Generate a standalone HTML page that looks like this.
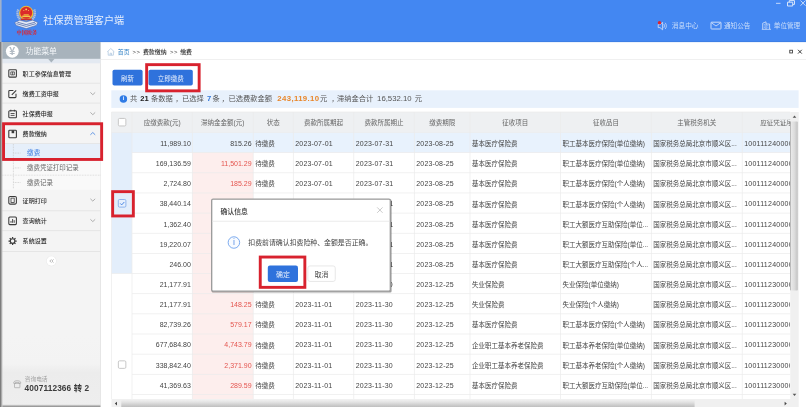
<!DOCTYPE html>
<html lang="zh-CN"><head><meta charset="utf-8"><title>社保费管理客户端</title>
<style>
html,body{margin:0;padding:0;}
body{width:806px;height:407px;overflow:hidden;position:relative;background:#fff;
 font-family:"Liberation Sans","Noto Sans CJK SC",sans-serif;color:#333;}
div,svg{position:absolute;box-sizing:border-box;}
svg{left:0;top:0;}
.t{white-space:nowrap;line-height:1;}
.num{font-size:7px;text-align:right;color:#444;}
.c{font-size:6.5px;color:#444;}
.d{font-size:7px;color:#444;letter-spacing:0.17px;}
.hd{font-size:6.5px;color:#666;text-align:center;}
#bl{left:-6px;top:-6px;width:818px;height:419px;filter:blur(0.4px);will-change:transform;overflow:hidden;}
#pg{left:6px;top:6px;width:806px;height:407px;}
svg{overflow:visible;}
</style></head><body><div id="bl"><div id="pg">
<svg width="806" height="407" viewBox="0 0 806 407">
<rect x="-6.00" y="-6.00" width="818.00" height="48.00" fill="#4387f2" />
<rect x="-6.00" y="41.30" width="818.00" height="0.80" fill="#3b7ce2" />
<g>
<path d="M18.2 9.5C16.6 13.2 17.6 18 21.4 20.6M34.2 9.5C35.8 13.2 34.8 18 31 20.6" fill="none" stroke="#aebfdf" stroke-width="2.3" stroke-dasharray="1.3 0.5"/>
<path d="M14.7 22.6L19.6 20.2L26.2 21.8L32.8 20.2L37.9 22.6L36.2 25.4L26.2 28.6L16.3 25.4Z" fill="#e3eaf6" stroke="#4c66a8" stroke-width="0.55" stroke-linejoin="round"/>
<path d="M16.4 23.6L26.2 26.4L36 23.6M17.4 22.2L26.2 24.6L35 22.2" fill="none" stroke="#3f5aa0" stroke-width="0.7"/>
<circle cx="26.2" cy="13.1" r="7.3" fill="#e9b93f"/>
<circle cx="26.2" cy="12.7" r="6" fill="#db2a2a"/>
<path d="M22.2 15.6h8v1.5h-8z" fill="#f1c84b"/>
<path d="M23.6 14.2h5.2v1.4h-5.2z" fill="#eeb93e"/>
<circle cx="26.2" cy="9.4" r="0.95" fill="#f7d660"/>
<circle cx="23.9" cy="10.6" r="0.5" fill="#f7d660"/><circle cx="28.5" cy="10.6" r="0.5" fill="#f7d660"/>
<path d="M20.6 18.6h11.2v1.5H20.6z" fill="#c9302f"/>
</g>
<rect x="776.00" y="2.85" width="4.50" height="0.90" fill="#cfe0fb" />
<g transform="translate(786.50 0.00)"><path d="M1 2.2h5.2v3.8H1z M2.8 2.2V0.6H8v3.8H6.2" fill="none" stroke="#d6e4fb" stroke-width="1"/></g>
<g transform="translate(799.50 0.00)"><path d="M1 0.5l5 5.2M6 0.5l-5 5.2" fill="none" stroke="#cfe0fb" stroke-width="0.9"/></g>
<g transform="translate(656.00 20.40)"><path d="M2.2 4.2h1.8l2.6-2.2v7.4L4 7.2H2.2z" fill="none" stroke="#d4e2fa" stroke-width="0.8" stroke-linejoin="round"/>
<path d="M7.8 3.6c.8.9.8 2.9 0 3.8M9.2 2.4c1.5 1.6 1.5 4.6 0 6.2" fill="none" stroke="#d4e2fa" stroke-width="0.75"/>
<circle cx="3.5" cy="2.3" r="1.75" fill="#e0252d"/></g>
<g transform="translate(710.50 21.70)"><rect x="0.5" y="0.5" width="10" height="6.8" rx="0.6" fill="none" stroke="#d8e5fb" stroke-width="0.9"/>
<path d="M0.8 1l4.7 3.3L10.2 1" fill="none" stroke="#d8e5fb" stroke-width="0.8"/></g>
<g transform="translate(761.50 21.00)"><path d="M1.2 8.2V2.2l3.3-1.4v7.4M4.5 3h3.6v5.2M0.3 8.3h9.2" fill="none" stroke="#d4e2fa" stroke-width="0.8"/>
<path d="M2.3 3.4h1.1M2.3 5h1.1M2.3 6.6h1.1M5.8 4.6h1.1M5.8 6.2h1.1" stroke="#d4e2fa" stroke-width="0.6"/></g>
<rect x="-6.00" y="42.00" width="106.40" height="371.00" fill="#f4f4f4" />
<rect x="100.05" y="42.00" width="0.70" height="371.00" fill="#dedede" />
<rect x="2.00" y="42.00" width="98.40" height="16.90" fill="#a8b3bc" />
<rect x="2.00" y="58.90" width="98.40" height="4.40" fill="#e3e9f1" />
<path d="M48 58.8h6.6L51.3 62.6z" fill="#a8b3bc"/>
<circle cx="12.3" cy="51.3" r="6.4" fill="#fff"/>
<rect x="2.00" y="143.50" width="98.40" height="46.40" fill="#f9f9f9" />
<rect x="2.00" y="143.60" width="98.40" height="16.90" fill="#e6effa" />
<rect x="2.00" y="82.80" width="98.40" height="0.80" fill="#e2e2e2" />
<g transform="translate(8.20 69.10)"><rect x="0.6" y="0.6" width="7.6" height="7.4" rx="0.8" fill="none" stroke="#3a3a3a" stroke-width="1.05"/><path d="M2.6 2.8h3.6v3H2.6zM4.4 2.8v3" fill="none" stroke="#3a3a3a" stroke-width="0.75"/></g>
<rect x="2.00" y="102.70" width="98.40" height="0.80" fill="#e2e2e2" />
<g transform="translate(8.20 89.50)"><path d="M5.2 0.9H1.4a.8.8 0 0 0-.8.8v5.6a.8.8 0 0 0 .8.8h5.6a.8.8 0 0 0 .8-.8V4.2" fill="none" stroke="#3a3a3a" stroke-width="1.05"/><path d="M3.6 5.4L8 0.9" stroke="#3a3a3a" stroke-width="1.1"/></g>
<g transform="translate(89.80 91.50)"><path d="M0.6 0.9L3 3.2L5.4 0.9" fill="none" stroke="#9c9c9c" stroke-width="0.8"/></g>
<rect x="2.00" y="122.60" width="98.40" height="0.80" fill="#e2e2e2" />
<g transform="translate(8.20 109.50)"><rect x="0.6" y="1.3" width="7.6" height="6.9" rx="0.8" fill="none" stroke="#3a3a3a" stroke-width="1.05"/><path d="M2.6 0.2v1.8M6.2 0.2v1.8M2.4 4h4M2.4 5.9h4" stroke="#3a3a3a" stroke-width="0.85"/></g>
<g transform="translate(89.80 111.50)"><path d="M0.6 0.9L3 3.2L5.4 0.9" fill="none" stroke="#9c9c9c" stroke-width="0.8"/></g>
<rect x="2.00" y="143.10" width="98.40" height="0.80" fill="#e2e2e2" />
<g transform="translate(8.20 129.60)"><rect x="0.6" y="0.6" width="7.6" height="7.6" rx="0.9" fill="none" stroke="#3a3a3a" stroke-width="1.1"/><path d="M3.4 0.8h2.6v2.8H3.4z" fill="#3a3a3a"/></g>
<g transform="translate(89.80 131.60)"><path d="M0.6 3.2L3 0.9L5.4 3.2" fill="none" stroke="#3b7de0" stroke-width="0.8"/></g>
<rect x="2.00" y="210.40" width="98.40" height="0.80" fill="#e2e2e2" />
<g transform="translate(8.20 195.90)"><rect x="0.6" y="0.6" width="7.6" height="7.6" rx="1.3" fill="none" stroke="#3a3a3a" stroke-width="1.05"/><rect x="2.8" y="2.2" width="3.2" height="4.4" fill="none" stroke="#3a3a3a" stroke-width="0.8"/></g>
<g transform="translate(89.80 197.90)"><path d="M0.6 0.9L3 3.2L5.4 0.9" fill="none" stroke="#9c9c9c" stroke-width="0.8"/></g>
<rect x="2.00" y="230.30" width="98.40" height="0.80" fill="#e2e2e2" />
<g transform="translate(8.20 216.40)"><rect x="0.6" y="0.6" width="7.6" height="7.6" rx="1" fill="none" stroke="#3a3a3a" stroke-width="1.05"/><path d="M2.8 6.4V4.6M4.4 6.4V2.6M6 6.4V3.8" stroke="#3a3a3a" stroke-width="0.9"/></g>
<g transform="translate(89.80 218.40)"><path d="M0.6 0.9L3 3.2L5.4 0.9" fill="none" stroke="#9c9c9c" stroke-width="0.8"/></g>
<rect x="2.00" y="251.00" width="98.40" height="0.80" fill="#e2e2e2" />
<g transform="translate(8.20 236.60)"><circle cx="4.4" cy="4.4" r="2.3" fill="none" stroke="#3a3a3a" stroke-width="1.15"/><path d="M7.00 4.40L8.50 4.40M6.24 6.24L7.30 7.30M4.40 7.00L4.40 8.50M2.56 6.24L1.50 7.30M1.80 4.40L0.30 4.40M2.56 2.56L1.50 1.50M4.40 1.80L4.40 0.30M6.24 2.56L7.30 1.50" stroke="#3a3a3a" stroke-width="1.25"/></g>
<path d="M2 175.2H100.4" stroke="#d0d0d0" stroke-width="0.7" stroke-dasharray="0.8 0.8"/>
<path d="M13.4 144V189" stroke="#c4c4c4" stroke-width="0.7" stroke-dasharray="0.8 0.8"/>
<path d="M13.4 153.1H20.4" stroke="#c4c4c4" stroke-width="0.7" stroke-dasharray="0.8 0.8"/>
<path d="M13.4 167.9H20.4" stroke="#c4c4c4" stroke-width="0.7" stroke-dasharray="0.8 0.8"/>
<path d="M13.4 182.5H20.4" stroke="#c4c4c4" stroke-width="0.7" stroke-dasharray="0.8 0.8"/>
<circle cx="51.4" cy="261" r="5.2" fill="#e9e9e9"/><circle cx="51.4" cy="261" r="4.7" fill="#fff"/>
<g transform="translate(49.20 259.00)"><path d="M2.2 0.4L0.6 2l1.6 1.6M4.3 0.4L2.7 2l1.6 1.6" fill="none" stroke="#9a9a9a" stroke-width="0.7"/></g>
<defs><linearGradient id="wm" x1="0" y1="0" x2="0" y2="1"><stop offset="0" stop-color="#f4f4f4"/><stop offset="0.4" stop-color="#f3f3f3"/><stop offset="0.52" stop-color="#ececec"/><stop offset="1" stop-color="#eeeeee"/></linearGradient><linearGradient id="bs" x1="0" y1="0" x2="0" y2="1"><stop offset="0" stop-color="#dcdcdc"/><stop offset="1" stop-color="#8c8c8c"/></linearGradient></defs>
<rect x="2.00" y="335.00" width="98.00" height="72.00" fill="url(#wm)" />
<rect x="2.00" y="404.60" width="98.40" height="2.40" fill="url(#bs)" />
<rect x="2.00" y="406.90" width="98.40" height="7.00" fill="#8c8c8c" />
<g transform="translate(13.20 379.80)"><path d="M0.5 2.8c0-2.5 7-2.5 7 0v0.7H5.6V2.6H2.4v0.9H0.5z" fill="none" stroke="#9a9a9a" stroke-width="0.6"/><rect x="1.3" y="3.6" width="5.4" height="4.3" rx="0.5" fill="none" stroke="#9a9a9a" stroke-width="0.6"/></g>
<rect x="-6.00" y="-6.00" width="7.60" height="48.00" fill="#9fb1cc" />
<rect x="-6.00" y="42.00" width="7.70" height="371.00" fill="#7d7d7d" />
<rect x="1.70" y="42.00" width="0.80" height="371.00" fill="#c8c8c8" />
<rect x="101.00" y="59.10" width="711.00" height="0.80" fill="#ececec" />
<g transform="translate(106.60 47.60)"><path d="M0.6 4.3L4.2 0.9l3.6 3.4M1.6 3.8v3.8h5.2V3.8M3.5 7.6V5.6h1.4v2" fill="none" stroke="#a9c3dc" stroke-width="0.7" stroke-linejoin="round"/></g>
<rect x="789.75" y="50.25" width="2.70" height="2.70" rx="0" fill="none" stroke="#444" stroke-width="0.9"/>
<g transform="translate(797.40 49.20)"><path d="M0.6 0.6l3.8 3.8M4.4 0.6L0.6 4.4" stroke="#333" stroke-width="0.95"/></g>
<rect x="112.50" y="69.70" width="30.10" height="15.80" fill="#2f72dc" rx="1.8"/>
<rect x="148.50" y="69.70" width="44.30" height="15.80" fill="#2f72dc" rx="1.8"/>
<rect x="111.30" y="90.30" width="687.30" height="17.60" fill="#e8f1fc" />
<circle cx="123.4" cy="99" r="3.75" fill="#2f7be6"/>
<rect x="111.50" y="112.00" width="678.80" height="20.50" fill="#eef0f2" />
<rect x="111.50" y="132.50" width="678.80" height="20.15" fill="#e8f2fd" />
<rect x="111.50" y="132.50" width="20.50" height="141.05" fill="#e3eefb" />
<rect x="192.30" y="152.65" width="60.90" height="246.35" fill="#fdeeed" />
<rect x="111.50" y="111.65" width="678.80" height="0.70" fill="#ebebeb" />
<rect x="111.50" y="132.15" width="678.80" height="0.70" fill="#ebebeb" />
<rect x="132.00" y="152.30" width="658.30" height="0.70" fill="#ebebeb" />
<rect x="132.00" y="172.45" width="658.30" height="0.70" fill="#ebebeb" />
<rect x="132.00" y="192.60" width="658.30" height="0.70" fill="#ebebeb" />
<rect x="132.00" y="212.75" width="658.30" height="0.70" fill="#ebebeb" />
<rect x="132.00" y="232.90" width="658.30" height="0.70" fill="#ebebeb" />
<rect x="132.00" y="253.05" width="658.30" height="0.70" fill="#ebebeb" />
<rect x="111.50" y="273.20" width="678.80" height="0.70" fill="#ebebeb" />
<rect x="132.00" y="293.35" width="658.30" height="0.70" fill="#ebebeb" />
<rect x="132.00" y="313.50" width="658.30" height="0.70" fill="#ebebeb" />
<rect x="132.00" y="333.65" width="658.30" height="0.70" fill="#ebebeb" />
<rect x="132.00" y="353.80" width="658.30" height="0.70" fill="#ebebeb" />
<rect x="132.00" y="373.95" width="658.30" height="0.70" fill="#ebebeb" />
<rect x="132.00" y="394.10" width="658.30" height="0.70" fill="#ebebeb" />
<rect x="111.15" y="112.00" width="0.70" height="287.00" fill="#ebebeb" />
<rect x="131.65" y="112.00" width="0.70" height="287.00" fill="#ebebeb" />
<rect x="191.95" y="112.00" width="0.70" height="287.00" fill="#ebebeb" />
<rect x="252.85" y="112.00" width="0.70" height="287.00" fill="#ebebeb" />
<rect x="292.95" y="112.00" width="0.70" height="287.00" fill="#ebebeb" />
<rect x="353.45" y="112.00" width="0.70" height="287.00" fill="#ebebeb" />
<rect x="413.95" y="112.00" width="0.70" height="287.00" fill="#ebebeb" />
<rect x="469.65" y="112.00" width="0.70" height="287.00" fill="#ebebeb" />
<rect x="560.15" y="112.00" width="0.70" height="287.00" fill="#ebebeb" />
<rect x="650.95" y="112.00" width="0.70" height="287.00" fill="#ebebeb" />
<rect x="741.85" y="112.00" width="0.70" height="287.00" fill="#ebebeb" />
<rect x="118.35" y="118.45" width="7.50" height="7.50" rx="1.2" fill="#fff" stroke="#c2c2c2" stroke-width="0.9"/>
<rect x="118.30" y="199.50" width="7.60" height="7.60" rx="1.2" fill="#e6f0fd" stroke="#7aa6e8" stroke-width="0.8"/>
<g transform="translate(117.90 199.10)"><path d="M2.3 4.3l1.5 1.5l2.6-2.9" fill="none" stroke="#3b7de0" stroke-width="0.9"/></g>
<rect x="118.35" y="360.85" width="7.50" height="7.50" rx="1.2" fill="#fff" stroke="#c2c2c2" stroke-width="0.9"/>
<rect x="790.30" y="112.00" width="8.40" height="287.00" fill="#f0f0f0" />
<defs><linearGradient id="vt" x1="0" y1="0" x2="1" y2="0"><stop offset="0" stop-color="#8f8f8f"/><stop offset="0.12" stop-color="#e9e9e9"/><stop offset="0.55" stop-color="#dcdcdc"/><stop offset="1" stop-color="#c2c2c2"/></linearGradient><linearGradient id="ht" gradientUnits="userSpaceOnUse" x1="0" y1="399.6" x2="0" y2="407.4"><stop offset="0" stop-color="#f1f1f1"/><stop offset="0.35" stop-color="#e2e2e2"/><stop offset="1" stop-color="#bcbcbc"/></linearGradient></defs>
<rect x="790.30" y="121.60" width="7.50" height="169.00" fill="url(#vt)" rx="0.8"/>
<path d="M792.7 117.8L794.5 115.6l1.8 2.2z" fill="#555"/>
<path d="M792.7 393.8L794.5 396l1.8-2.2z" fill="#555"/>
<rect x="111.50" y="399.00" width="687.20" height="14.00" fill="#f0f0f0" />
<rect x="121.30" y="399.80" width="573.30" height="14.00" fill="url(#ht)" rx="0.8"/>
<path d="M117 401.8L114.8 403.6l2.2 1.8z" fill="#444"/>
<path d="M784.6 401.8L786.8 403.6l-2.2 1.8z" fill="#444"/>
</svg>
<div class="t" style="left:16.60px;top:30.30px;font-size:5.1px;color:#e0222c;font-weight:700;font-family:'Liberation Serif','Noto Serif CJK SC',serif;">中国税务</div>
<div class="t" style="left:43.30px;top:15.80px;font-size:10.1px;color:#e6eefc;letter-spacing:0.02px">社保费管理客户端</div>
<div class="t" style="left:671.80px;top:23.30px;font-size:6.7px;color:#cddffa">消息中心</div>
<div class="t" style="left:724.00px;top:23.30px;font-size:6.6px;color:#cddffa">通知公告</div>
<div class="t" style="left:773.80px;top:23.30px;font-size:6.6px;color:#cddffa">单位管理</div>
<div class="t" style="left:6.30px;top:46.10px;width:12px;text-align:center;font-size:10.6px;font-weight:700;color:#b3bcc5;font-family:'Liberation Sans',sans-serif">¥</div>
<div class="t" style="left:25.40px;top:47.80px;font-size:7.9px;color:#f4f7fa">功能菜单</div>
<div class="t" style="left:22.60px;top:70.90px;font-size:6.05px;font-weight:500;color:#2b2b2b">职工参保信息管理</div>
<div class="t" style="left:22.60px;top:91.30px;font-size:6.05px;font-weight:500;color:#2b2b2b">缴费工资申报</div>
<div class="t" style="left:22.60px;top:111.30px;font-size:6.05px;font-weight:500;color:#2b2b2b">社保费申报</div>
<div class="t" style="left:22.60px;top:131.40px;font-size:6.05px;font-weight:500;color:#2b2b2b">费款缴纳</div>
<div class="t" style="left:22.60px;top:197.70px;font-size:6.05px;font-weight:500;color:#2b2b2b">证明打印</div>
<div class="t" style="left:22.60px;top:218.20px;font-size:6.05px;font-weight:500;color:#2b2b2b">查询统计</div>
<div class="t" style="left:22.60px;top:238.40px;font-size:6.05px;font-weight:500;color:#2b2b2b">系统设置</div>
<div class="t" style="left:27.10px;top:149.90px;font-size:6.55px;color:#3a7be0">缴费</div>
<div class="t" style="left:27.10px;top:165.30px;font-size:6.45px;color:#666">缴费凭证打印记录</div>
<div class="t" style="left:27.10px;top:180.00px;font-size:6.45px;color:#666">缴费记录</div>
<div class="t" style="left:24.80px;top:376.60px;font-size:5.7px;color:#a2a2a2">咨询电话</div>
<div class="t" style="left:24.60px;top:384.10px;font-size:8.3px;color:#3c3c3c;font-weight:700;letter-spacing:0.1px">4007112366 转 2</div>
<div class="t" style="left:117.80px;top:50.40px;font-size:5.9px;color:#2e7fc4">首页</div>
<div class="t" style="left:132.40px;top:50.30px;font-size:5.9px;color:#444;letter-spacing:0.6px">&gt;&gt;</div>
<div class="t" style="left:142.90px;top:50.40px;font-size:5.95px;color:#333;font-weight:500">费款缴纳</div>
<div class="t" style="left:170.00px;top:50.30px;font-size:5.9px;color:#444;letter-spacing:0.6px">&gt;&gt;</div>
<div class="t" style="left:180.20px;top:50.40px;font-size:5.9px;color:#333;font-weight:500">缴费</div>
<div class="t" style="left:112.50px;top:75.70px;width:30px;text-align:center;font-size:6.4px;color:#eaf1fd">刷新</div>
<div class="t" style="left:148.50px;top:75.70px;width:44.3px;text-align:center;font-size:6.5px;color:#eaf1fd">立即缴费</div>
<div class="t" style="left:119.70px;top:96.30px;width:7.5px;text-align:center;font-size:5.4px;color:#fff;font-weight:700">i</div>
<div class="t" style="left:129.90px;top:95.10px;font-size:7.25px;color:#555">共</div>
<div class="t" style="left:140.30px;top:94.50px;font-weight:700;color:#222;font-size:7.6px">21</div>
<div class="t" style="left:151.00px;top:95.10px;font-size:7.25px;color:#555">条数据</div>
<div class="t" style="left:175.20px;top:95.10px;font-size:7.25px;color:#555">，</div>
<div class="t" style="left:182.00px;top:95.10px;font-size:7.25px;color:#555">已选择</div>
<div class="t" style="left:207.10px;top:94.50px;font-weight:700;color:#2f74d8;font-size:7.6px">7</div>
<div class="t" style="left:212.60px;top:95.10px;font-size:7.25px;color:#555">条</div>
<div class="t" style="left:221.60px;top:95.10px;font-size:7.25px;color:#555">，</div>
<div class="t" style="left:228.60px;top:95.10px;font-size:7.25px;color:#555">已选费款金额</div>
<div class="t" style="left:277.30px;top:95.00px;font-weight:700;color:#e8862a;font-size:7.8px;letter-spacing:0.36px">243,119.10</div>
<div class="t" style="left:319.90px;top:95.10px;font-size:7.25px;color:#555">元</div>
<div class="t" style="left:331.20px;top:95.10px;font-size:7.25px;color:#555">，</div>
<div class="t" style="left:337.00px;top:95.10px;font-size:7.25px;color:#555">滞纳金合计</div>
<div class="t" style="left:377.10px;top:95.00px;font-size:7.75px;color:#555">16,532.10</div>
<div class="t" style="left:414.80px;top:95.10px;font-size:7.25px;color:#555">元</div>
<div class="t hd" style="left:132.00px;top:119.70px;width:60.30px;">应缴费款(元)</div>
<div class="t hd" style="left:192.30px;top:119.70px;width:60.90px;">滞纳金金额(元)</div>
<div class="t hd" style="left:253.20px;top:119.70px;width:40.10px;">状态</div>
<div class="t hd" style="left:293.30px;top:119.70px;width:60.50px;">费款所属期起</div>
<div class="t hd" style="left:353.80px;top:119.70px;width:60.50px;">费款所属期止</div>
<div class="t hd" style="left:414.30px;top:119.70px;width:55.70px;">缴费期限</div>
<div class="t hd" style="left:470.00px;top:119.70px;width:90.50px;">征收项目</div>
<div class="t hd" style="left:560.50px;top:119.70px;width:90.80px;">征收品目</div>
<div class="t hd" style="left:651.30px;top:119.70px;width:90.90px;">主管税务机关</div>
<div class="t hd" style="left:742.20px;top:119.70px;width:75.10px;clip-path:inset(0 27.00px 0 0);">应征凭证序号</div>
<div class="t num" style="left:132.00px;top:139.90px;width:58.80px">11,989.10</div>
<div class="t num" style="left:192.30px;top:139.90px;width:59.30px;color:#444">815.26</div>
<div class="t c" style="left:255.20px;top:141.10px;">待缴费</div>
<div class="t d" style="left:295.30px;top:139.90px;">2023-07-01</div>
<div class="t d" style="left:355.80px;top:139.90px;">2023-07-31</div>
<div class="t d" style="left:416.30px;top:139.90px;">2023-08-25</div>
<div class="t c" style="left:472.00px;top:141.10px;">基本医疗保险费</div>
<div class="t c" style="left:562.50px;top:141.10px;">职工基本医疗保险(单位缴纳)</div>
<div class="t c" style="left:653.30px;top:141.10px;">国家税务总局北京市顺义区...</div>
<div class="t d" style="left:744.20px;top:139.90px;width:46.10px;overflow:hidden;letter-spacing:0.25px">100111240000</div>
<div class="t num" style="left:132.00px;top:160.05px;width:58.80px">169,136.59</div>
<div class="t num" style="left:192.30px;top:160.05px;width:59.30px;color:#e4554f">11,501.29</div>
<div class="t c" style="left:255.20px;top:161.25px;">待缴费</div>
<div class="t d" style="left:295.30px;top:160.05px;">2023-07-01</div>
<div class="t d" style="left:355.80px;top:160.05px;">2023-07-31</div>
<div class="t d" style="left:416.30px;top:160.05px;">2023-08-25</div>
<div class="t c" style="left:472.00px;top:161.25px;">基本医疗保险费</div>
<div class="t c" style="left:562.50px;top:161.25px;">职工基本医疗保险(单位缴纳)</div>
<div class="t c" style="left:653.30px;top:161.25px;">国家税务总局北京市顺义区...</div>
<div class="t d" style="left:744.20px;top:160.05px;width:46.10px;overflow:hidden;letter-spacing:0.25px">100111240000</div>
<div class="t num" style="left:132.00px;top:180.20px;width:58.80px">2,724.80</div>
<div class="t num" style="left:192.30px;top:180.20px;width:59.30px;color:#e4554f">185.29</div>
<div class="t c" style="left:255.20px;top:181.40px;">待缴费</div>
<div class="t d" style="left:295.30px;top:180.20px;">2023-07-01</div>
<div class="t d" style="left:355.80px;top:180.20px;">2023-07-31</div>
<div class="t d" style="left:416.30px;top:180.20px;">2023-08-25</div>
<div class="t c" style="left:472.00px;top:181.40px;">基本医疗保险费</div>
<div class="t c" style="left:562.50px;top:181.40px;">职工基本医疗保险(个人缴纳)</div>
<div class="t c" style="left:653.30px;top:181.40px;">国家税务总局北京市顺义区...</div>
<div class="t d" style="left:744.20px;top:180.20px;width:46.10px;overflow:hidden;letter-spacing:0.25px">100111240000</div>
<div class="t num" style="left:132.00px;top:200.35px;width:58.80px">38,440.14</div>
<div class="t num" style="left:192.30px;top:200.35px;width:59.30px;color:#e4554f">2,613.93</div>
<div class="t c" style="left:255.20px;top:201.55px;">待缴费</div>
<div class="t d" style="left:295.30px;top:200.35px;">2023-07-01</div>
<div class="t d" style="left:355.80px;top:200.35px;">2023-07-31</div>
<div class="t d" style="left:416.30px;top:200.35px;">2023-08-25</div>
<div class="t c" style="left:472.00px;top:201.55px;">基本医疗保险费</div>
<div class="t c" style="left:562.50px;top:201.55px;">职工基本医疗保险(个人缴纳)</div>
<div class="t c" style="left:653.30px;top:201.55px;">国家税务总局北京市顺义区...</div>
<div class="t d" style="left:744.20px;top:200.35px;width:46.10px;overflow:hidden;letter-spacing:0.25px">100111240000</div>
<div class="t num" style="left:132.00px;top:220.50px;width:58.80px">1,362.40</div>
<div class="t num" style="left:192.30px;top:220.50px;width:59.30px;color:#e4554f">92.64</div>
<div class="t c" style="left:255.20px;top:221.70px;">待缴费</div>
<div class="t d" style="left:295.30px;top:220.50px;">2023-07-01</div>
<div class="t d" style="left:355.80px;top:220.50px;">2023-07-31</div>
<div class="t d" style="left:416.30px;top:220.50px;">2023-08-25</div>
<div class="t c" style="left:472.00px;top:221.70px;">基本医疗保险费</div>
<div class="t c" style="left:562.50px;top:221.70px;">职工大额医疗互助保险(单位...</div>
<div class="t c" style="left:653.30px;top:221.70px;">国家税务总局北京市顺义区...</div>
<div class="t d" style="left:744.20px;top:220.50px;width:46.10px;overflow:hidden;letter-spacing:0.25px">100111240000</div>
<div class="t num" style="left:132.00px;top:240.65px;width:58.80px">19,220.07</div>
<div class="t num" style="left:192.30px;top:240.65px;width:59.30px;color:#e4554f">1,306.96</div>
<div class="t c" style="left:255.20px;top:241.85px;">待缴费</div>
<div class="t d" style="left:295.30px;top:240.65px;">2023-07-01</div>
<div class="t d" style="left:355.80px;top:240.65px;">2023-07-31</div>
<div class="t d" style="left:416.30px;top:240.65px;">2023-08-25</div>
<div class="t c" style="left:472.00px;top:241.85px;">基本医疗保险费</div>
<div class="t c" style="left:562.50px;top:241.85px;">职工大额医疗互助保险(单位...</div>
<div class="t c" style="left:653.30px;top:241.85px;">国家税务总局北京市顺义区...</div>
<div class="t d" style="left:744.20px;top:240.65px;width:46.10px;overflow:hidden;letter-spacing:0.25px">100111240000</div>
<div class="t num" style="left:132.00px;top:260.80px;width:58.80px">246.00</div>
<div class="t num" style="left:192.30px;top:260.80px;width:59.30px;color:#e4554f">16.73</div>
<div class="t c" style="left:255.20px;top:262.00px;">待缴费</div>
<div class="t d" style="left:295.30px;top:260.80px;">2023-07-01</div>
<div class="t d" style="left:355.80px;top:260.80px;">2023-07-31</div>
<div class="t d" style="left:416.30px;top:260.80px;">2023-08-25</div>
<div class="t c" style="left:472.00px;top:262.00px;">基本医疗保险费</div>
<div class="t c" style="left:562.50px;top:262.00px;">职工大额医疗互助保险(个人...</div>
<div class="t c" style="left:653.30px;top:262.00px;">国家税务总局北京市顺义区...</div>
<div class="t d" style="left:744.20px;top:260.80px;width:46.10px;overflow:hidden;letter-spacing:0.25px">100111240000</div>
<div class="t num" style="left:132.00px;top:280.95px;width:58.80px">21,177.91</div>
<div class="t num" style="left:192.30px;top:280.95px;width:59.30px;color:#e4554f">148.25</div>
<div class="t c" style="left:255.20px;top:282.15px;">待缴费</div>
<div class="t d" style="left:295.30px;top:280.95px;">2023-11-01</div>
<div class="t d" style="left:355.80px;top:280.95px;">2023-11-30</div>
<div class="t d" style="left:416.30px;top:280.95px;">2023-12-25</div>
<div class="t c" style="left:472.00px;top:282.15px;">失业保险费</div>
<div class="t c" style="left:562.50px;top:282.15px;">失业保险(单位缴纳)</div>
<div class="t c" style="left:653.30px;top:282.15px;">国家税务总局北京市顺义区...</div>
<div class="t d" style="left:744.20px;top:280.95px;width:46.10px;overflow:hidden;letter-spacing:0.25px">100111230000</div>
<div class="t num" style="left:132.00px;top:301.10px;width:58.80px">21,177.91</div>
<div class="t num" style="left:192.30px;top:301.10px;width:59.30px;color:#e4554f">148.25</div>
<div class="t c" style="left:255.20px;top:302.30px;">待缴费</div>
<div class="t d" style="left:295.30px;top:301.10px;">2023-11-01</div>
<div class="t d" style="left:355.80px;top:301.10px;">2023-11-30</div>
<div class="t d" style="left:416.30px;top:301.10px;">2023-12-25</div>
<div class="t c" style="left:472.00px;top:302.30px;">失业保险费</div>
<div class="t c" style="left:562.50px;top:302.30px;">失业保险(个人缴纳)</div>
<div class="t c" style="left:653.30px;top:302.30px;">国家税务总局北京市顺义区...</div>
<div class="t d" style="left:744.20px;top:301.10px;width:46.10px;overflow:hidden;letter-spacing:0.25px">100111230000</div>
<div class="t num" style="left:132.00px;top:321.25px;width:58.80px">82,739.26</div>
<div class="t num" style="left:192.30px;top:321.25px;width:59.30px;color:#e4554f">579.17</div>
<div class="t c" style="left:255.20px;top:322.45px;">待缴费</div>
<div class="t d" style="left:295.30px;top:321.25px;">2023-11-01</div>
<div class="t d" style="left:355.80px;top:321.25px;">2023-11-30</div>
<div class="t d" style="left:416.30px;top:321.25px;">2023-12-25</div>
<div class="t c" style="left:472.00px;top:322.45px;">基本医疗保险费</div>
<div class="t c" style="left:562.50px;top:322.45px;">职工基本医疗保险(个人缴纳)</div>
<div class="t c" style="left:653.30px;top:322.45px;">国家税务总局北京市顺义区...</div>
<div class="t d" style="left:744.20px;top:321.25px;width:46.10px;overflow:hidden;letter-spacing:0.25px">100111230000</div>
<div class="t num" style="left:132.00px;top:341.40px;width:58.80px">677,684.80</div>
<div class="t num" style="left:192.30px;top:341.40px;width:59.30px;color:#e4554f">4,743.79</div>
<div class="t c" style="left:255.20px;top:342.60px;">待缴费</div>
<div class="t d" style="left:295.30px;top:341.40px;">2023-11-01</div>
<div class="t d" style="left:355.80px;top:341.40px;">2023-11-30</div>
<div class="t d" style="left:416.30px;top:341.40px;">2023-12-25</div>
<div class="t c" style="left:472.00px;top:342.60px;">企业职工基本养老保险费</div>
<div class="t c" style="left:562.50px;top:342.60px;">职工基本养老保险(单位缴纳)</div>
<div class="t c" style="left:653.30px;top:342.60px;">国家税务总局北京市顺义区...</div>
<div class="t d" style="left:744.20px;top:341.40px;width:46.10px;overflow:hidden;letter-spacing:0.25px">100111230000</div>
<div class="t num" style="left:132.00px;top:361.55px;width:58.80px">338,842.40</div>
<div class="t num" style="left:192.30px;top:361.55px;width:59.30px;color:#e4554f">2,371.90</div>
<div class="t c" style="left:255.20px;top:362.75px;">待缴费</div>
<div class="t d" style="left:295.30px;top:361.55px;">2023-11-01</div>
<div class="t d" style="left:355.80px;top:361.55px;">2023-11-30</div>
<div class="t d" style="left:416.30px;top:361.55px;">2023-12-25</div>
<div class="t c" style="left:472.00px;top:362.75px;">企业职工基本养老保险费</div>
<div class="t c" style="left:562.50px;top:362.75px;">职工基本养老保险(个人缴纳)</div>
<div class="t c" style="left:653.30px;top:362.75px;">国家税务总局北京市顺义区...</div>
<div class="t d" style="left:744.20px;top:361.55px;width:46.10px;overflow:hidden;letter-spacing:0.25px">100111230000</div>
<div class="t num" style="left:132.00px;top:381.70px;width:58.80px">41,369.63</div>
<div class="t num" style="left:192.30px;top:381.70px;width:59.30px;color:#e4554f">289.59</div>
<div class="t c" style="left:255.20px;top:382.90px;">待缴费</div>
<div class="t d" style="left:295.30px;top:381.70px;">2023-11-01</div>
<div class="t d" style="left:355.80px;top:381.70px;">2023-11-30</div>
<div class="t d" style="left:416.30px;top:381.70px;">2023-12-25</div>
<div class="t c" style="left:472.00px;top:382.90px;">基本医疗保险费</div>
<div class="t c" style="left:562.50px;top:382.90px;">职工大额医疗互助保险(单位...</div>
<div class="t c" style="left:653.30px;top:382.90px;">国家税务总局北京市顺义区...</div>
<div class="t d" style="left:744.20px;top:381.70px;width:46.10px;overflow:hidden;letter-spacing:0.25px">100111230000</div>
<svg width="806" height="407" viewBox="0 0 806 407">
<rect x="146.65" y="64.65" width="52.50" height="26.20" rx="0" fill="none" stroke="#d8222e" stroke-width="2.9"/>
<rect x="112.65" y="191.65" width="20.70" height="24.30" rx="0" fill="none" stroke="#d8222e" stroke-width="2.9"/>
<rect x="3.55" y="123.75" width="98.10" height="35.70" rx="0" fill="none" stroke="#d8222e" stroke-width="2.9"/>
<defs><filter id="sh" x="-5%" y="-5%" width="110%" height="112%"><feGaussianBlur stdDeviation="0.7"/></filter></defs>
<rect x="211.60" y="199.20" width="180.00" height="93.20" fill="rgba(0,0,0,.38)" rx="1.5" filter="url(#sh)"/>
<rect x="211.68" y="199.18" width="178.65" height="91.95" rx="1.4" fill="#fff" stroke="#9c9c9c" stroke-width="1.35"/>
<rect x="212.30" y="220.80" width="176.90" height="0.80" fill="#e6e6e6" />
<g transform="translate(376.60 206.80)"><path d="M0.6 0.6l5.4 5.4M6 0.6L0.6 6" stroke="#b4b4b4" stroke-width="0.7"/></g>
<circle cx="233.9" cy="242.5" r="5.75" fill="#f8fbff" stroke="#5c95ea" stroke-width="0.8"/>
<rect x="267.80" y="265.60" width="30.20" height="16.40" fill="#2f72dc" rx="2.1"/>
<rect x="307.85" y="265.95" width="27.40" height="15.50" rx="2.1" fill="#fff" stroke="#dedede" stroke-width="0.7"/>
<rect x="260.25" y="257.05" width="44.60" height="30.30" rx="0" fill="none" stroke="#d8222e" stroke-width="2.9"/>
</svg>
<div class="t" style="left:220.50px;top:208.90px;font-size:6.85px;color:#333;font-weight:500">确认信息</div>
<div class="t" style="left:227.60px;top:238.30px;width:12.6px;text-align:center;font-size:8.8px;color:#5a90e4;font-family:'Liberation Sans',sans-serif">i</div>
<div class="t" style="left:248.30px;top:239.90px;font-size:6.9px;color:#444">扣费前请确认扣费险种、金额是否正确。</div>
<div class="t" style="left:267.80px;top:271.60px;width:30.2px;text-align:center;font-size:6.9px;color:#eaf1fd">确定</div>
<div class="t" style="left:307.50px;top:271.60px;width:28.1px;text-align:center;font-size:6.9px;color:#444">取消</div>
</div></div></body></html>
